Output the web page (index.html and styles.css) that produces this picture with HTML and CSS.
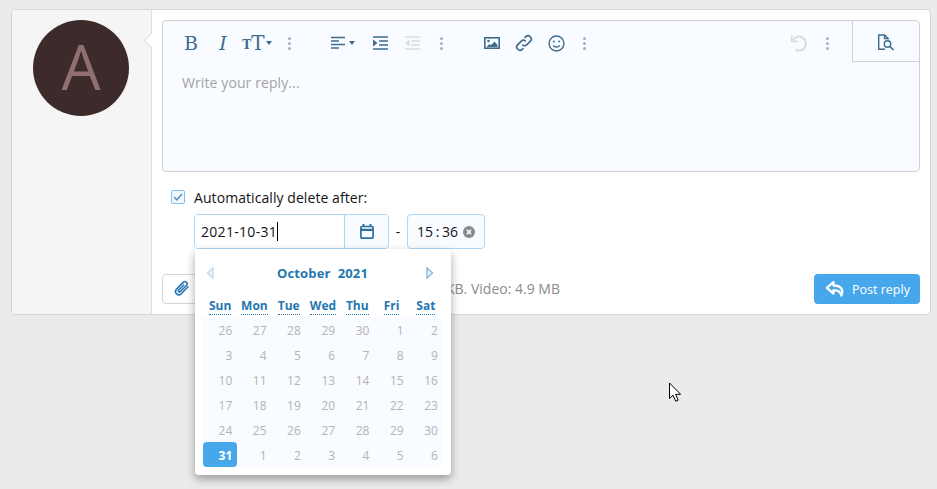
FILE: index.html
```html
<!DOCTYPE html>
<html lang="en">
<head>
  <meta charset="UTF-8">
  <title>Post reply</title>
  <link rel="stylesheet" href="styles.css">
</head>
<body>
  <div class="card">
    <div class="side">
      <div class="avatar">A</div>
      <span class="pointer"></span>
    </div>
    <div class="main">
      <div class="editor">
        <div class="toolbar">
          <div class="group first">
            <span class="btn letter">B</span>
            <span class="btn letter italic">I</span>
            <span class="btn size"><span class="small-t">T</span><span class="big-t">T</span><i class="caret"></i></span>
            <span class="btn dots"><i></i><i></i><i></i></span>
          </div>
          <div class="group second">
            <span class="btn align">
              <svg width="14" height="14" viewBox="0 0 14 14"><path d="M0 1.5h14M0 5h8M0 8.500h14M0 12h8" stroke="#3f6b8c" stroke-width="1.600"/></svg>
              <i class="caret"></i>
            </span>
            <span class="btn">
              <svg width="15" height="14" viewBox="0 0 15 14"><path d="M0 1h15M6 5h9M6 9h9M0 13h15" stroke="#3f6b8c" stroke-width="1.700"/><path d="M0 3.500L4.500 7 0 10.500z" fill="#3f6b8c"/></svg>
            </span>
            <span class="btn">
              <svg width="15" height="14" viewBox="0 0 15 14"><path d="M0 1h15M6 5h9M6 9h9M0 13h15" stroke="#d8dcdf" stroke-width="1.700"/><path d="M4.500 3.500L0 7l4.500 3.500z" fill="#d8dcdf"/></svg>
            </span>
            <span class="btn dots"><i></i><i></i><i></i></span>
          </div>
          <div class="group third">
            <span class="btn">
              <svg width="16" height="12" viewBox="0 0 16 12"><rect x=".8" y=".8" width="14.400" height="10.400" fill="none" stroke="#3f6b8c" stroke-width="1.600"/><circle cx="4.500" cy="4" r="1.300" fill="#3f6b8c"/><path d="M2.500 10l3-3 1.500 1.200L10.500 4.500 13.500 8v2z" fill="#3f6b8c"/></svg>
            </span>
            <span class="btn">
              <svg width="18" height="18" viewBox="0 0 16 16" fill="none" stroke="#3f6b8c" stroke-width="1.500"><path d="M6.500 9.500a2.900 2.900 0 0 0 4.100 0l3-3a2.900 2.900 0 0 0-4.100-4.100L8.500 3.400"/><path d="M9.500 6.500a2.900 2.900 0 0 0-4.100 0l-3 3a2.900 2.900 0 0 0 4.100 4.100l1-1"/></svg>
            </span>
            <span class="btn">
              <svg width="17" height="17" viewBox="0 0 16 16" fill="none" stroke="#3f6b8c" stroke-width="1.300"><circle cx="8" cy="8" r="7"/><path d="M4.800 9.800c1.600 2 4.800 2 6.400 0"/><circle cx="5.500" cy="6" r=".9" fill="#3f6b8c" stroke="none"/><circle cx="10.500" cy="6" r=".9" fill="#3f6b8c" stroke="none"/></svg>
            </span>
            <span class="btn dots narrow"><i></i><i></i><i></i></span>
          </div>
          <div class="group right">
            <span class="btn">
              <svg width="18" height="18" viewBox="0 0 16 16" fill="none" stroke="#d8dcdf" stroke-width="1.800"><path d="M2.500 5.500A6.200 6.200 0 1 1 5 14"/><path d="M1.500 1v5.500H7" stroke-width="1.500"/></svg>
            </span>
            <span class="btn dots narrow"><i></i><i></i><i></i></span>
          </div>
          <div class="preview">
            <svg width="18" height="17" viewBox="0 0 18 17" fill="none" stroke="#3f6b8c" stroke-width="1.400"><path d="M8 15.300H1.700V1h6l3.500 3.500v1"/><path d="M7.500 1v3.500h3.500"/><circle cx="10.500" cy="10" r="3.200"/><path d="M13 12.500l3.500 3.500" stroke-width="1.700"/></svg>
          </div>
        </div>
        <div class="placeholder">Write your reply...</div>
      </div>

      <label class="check-row">
        <span class="checkbox">
          <svg width="10" height="8" viewBox="0 0 10 8" fill="none" stroke="#5d90b8" stroke-width="1.500"><path d="M1 4l2.800 2.800L9 1"/></svg>
        </span>
        Automatically delete after:
      </label>

      <div class="date-row">
        <div class="date-input">
          <span class="date-text">2021-10-31<i class="text-cursor"></i></span>
          <span class="date-btn">
            <svg width="14" height="15" viewBox="0 0 14 15" fill="none" stroke="#2f6f9f" stroke-width="1.700"><rect x=".9" y="2.500" width="12.200" height="11.600" rx="1"/><path d="M.8 5.800h12.400" stroke-width="2.200"/><path d="M3.500 0v3M10.500 0v3" stroke-width="2"/></svg>
          </span>
        </div>
        <span class="dash">-</span>
        <div class="time-input">
          <span class="time-text">15 : 36</span>
          <svg width="12" height="12" viewBox="0 0 12 12"><circle cx="6" cy="6" r="6" fill="#8a8a8a"/><path d="M3.800 3.800l4.400 4.400M8.200 3.800L3.800 8.200" stroke="#fff" stroke-width="1.500"/></svg>
        </div>
      </div>

      <div class="footer">
        <span class="attach">
          <svg width="16" height="18" viewBox="0 0 16 18" fill="none" stroke="#2577b1" stroke-width="1.600"><path d="M14.300 6.500L7 14a3.300 3.300 0 0 1-4.700-4.600l7.200-7.300a2.200 2.200 0 0 1 3.100 3.100l-6.500 6.600a1 1 0 0 1-1.500-1.500L10 4.800"/></svg>
        </span>
        <span class="limits">KB. Video: 4.9 MB</span>
        <span class="post">
          <svg width="20" height="18" viewBox="0 0 20 18" fill="none" stroke="#fff" stroke-width="2.300"><path d="M8.500 2L1.800 7.800l6.700 5.700v-3.300c4.500 0 7 1 7.800 5.300 2.500-5.500 0-10-7.800-10z" stroke-linejoin="round"/></svg>
          Post reply
        </span>
      </div>
    </div>
  </div>

  <div class="picker">
    <div class="picker-head">
      <svg width="8" height="12" viewBox="0 0 8 12"><path d="M7 1L1.500 6 7 11z" fill="#f1f6fa" stroke="#c8dcea" stroke-width="1.500"/></svg>
      <span class="month">October&nbsp; 2021</span>
      <svg width="8" height="12" viewBox="0 0 8 12"><path d="M1 1l5.500 5L1 11z" fill="#f1f6fa" stroke="#8fb8d8" stroke-width="1.500"/></svg>
    </div>
    <div class="days">
      <span class="dow"><abbr>Sun</abbr></span><span class="dow"><abbr>Mon</abbr></span><span class="dow"><abbr>Tue</abbr></span><span class="dow"><abbr>Wed</abbr></span><span class="dow"><abbr>Thu</abbr></span><span class="dow"><abbr>Fri</abbr></span><span class="dow"><abbr>Sat</abbr></span>
    </div>
    <div class="dates">
      <span>26</span><span>27</span><span>28</span><span>29</span><span>30</span><span>1</span><span>2</span>
      <span>3</span><span>4</span><span>5</span><span>6</span><span>7</span><span>8</span><span>9</span>
      <span>10</span><span>11</span><span>12</span><span>13</span><span>14</span><span>15</span><span>16</span>
      <span>17</span><span>18</span><span>19</span><span>20</span><span>21</span><span>22</span><span>23</span>
      <span>24</span><span>25</span><span>26</span><span>27</span><span>28</span><span>29</span><span>30</span>
      <span class="selected">31</span><span>1</span><span>2</span><span>3</span><span>4</span><span>5</span><span>6</span>
    </div>
  </div>

  <svg class="mouse" width="15" height="21" viewBox="0 0 15 21"><path d="M1.500 1v15.500l3.600-3.300 2.600 6 2.500-1.100-2.600-5.800h5z" fill="#fff" stroke="#000" stroke-width="1"/></svg>
</body>
</html>
```

FILE: styles.css
```css
* {
  box-sizing: border-box;
}
body {
  margin: 0;
  padding: 9px 6px 0 11px;
  height: 489px;
  overflow: hidden;
  background: #ebebeb;
  font-family: "Open Sans", "Noto Sans", Arial, sans-serif;
  font-size: 14px;
  color: #141414;
}
.card {
  display: flex;
  width: 920px;
  height: 306px;
  background: white;
  border: 1px solid #d5d5d5;
  border-radius: 4px;
}
.side {
  position: relative;
  width: 140px;
  padding: 10px 0 0 21px;
  background: #f5f5f5;
  border-right: 1px solid #dfdfdf;
  border-radius: 3px 0 0 3px;
}
.avatar {
  display: flex;
  align-items: center;
  justify-content: center;
  width: 96px;
  height: 96px;
  padding-bottom: 4px;
  border-radius: 50%;
  background: #3d2b2b;
  color: #8f6f6f;
  font-size: 62px;
  line-height: 1;
}
.pointer {
  position: absolute;
  top: 25px;
  right: -6px;
  width: 11px;
  height: 11px;
  background: white;
  border-left: 1px solid #dfdfdf;
  border-bottom: 1px solid #dfdfdf;
  transform: rotate(45deg);
}
.main {
  flex: 1;
  padding: 10px;
}
.editor {
  height: 152px;
  background: #f8fbff;
  border: 1px solid #cfd2d5;
  border-radius: 4px;
}
.toolbar {
  display: flex;
  height: 41px;
  padding-left: 12px;
}
.group {
  display: flex;
}
.second {
  margin-left: 17px;
}
.third {
  margin-left: 22px;
}
.right {
  margin-left: auto;
  margin-right: 13px;
}
.btn {
  display: flex;
  align-items: center;
  justify-content: center;
  width: 32px;
  height: 44px;
  color: #3f6b8c;
}
.letter {
  font-family: "DejaVu Serif", "Liberation Serif", serif;
  font-size: 19px;
}
.italic {
  font-style: italic;
}
.size {
  width: 36px;
  font-family: "DejaVu Serif", serif;
}
.small-t {
  font-size: 12px;
  margin-top: 4px;
  font-weight: bold;
}
.big-t {
  font-size: 20px;
}
.caret {
  display: inline-block;
  margin-left: 1px;
  border-top: 4px solid #3f6b8c;
  border-left: 3.500px solid transparent;
  border-right: 3.500px solid transparent;
}
.dots {
  flex-direction: column;
  gap: 2px;
  width: 29px;
}
.dots i {
  width: 3px;
  height: 3px;
  border-radius: 50%;
  background: #9fb1c2;
}
.second .dots {
  width: 26px;
}
.dots.narrow {
  width: 24px;
}
.align {
  width: 43px;
  gap: 3px;
}
.preview {
  display: flex;
  align-items: center;
  justify-content: center;
  width: 67px;
  height: 41px;
  padding-top: 3px;
  border-left: 1px solid #cfd2d5;
  border-bottom: 1px solid #cfd2d5;
}
.placeholder {
  padding: 11px 19px;
  font-size: 14px;
  letter-spacing: 0.1px;
  line-height: 20px;
  color: #a4a4a4;
}
.check-row {
  display: flex;
  align-items: center;
  gap: 9px;
  height: 20px;
  margin: 15px 0 0 9px;
  letter-spacing: 0.07px;
}
.checkbox {
  display: flex;
  align-items: center;
  justify-content: center;
  width: 14px;
  height: 14px;
  background: #f3f8fd;
  border: 1px solid #84bfec;
  border-radius: 2px;
}
.date-row {
  display: flex;
  align-items: center;
  height: 35px;
  margin: 7px 0 0 32px;
}
.date-input {
  display: flex;
  width: 195px;
  height: 35px;
  border: 1px solid #aed7f5;
  border-radius: 4px;
  overflow: hidden;
}
.date-text {
  display: flex;
  align-items: center;
  flex: 1;
  padding-left: 6px;
  background: white;
  letter-spacing: 0.3px;
}
.text-cursor {
  width: 1px;
  height: 19px;
  background: black;
}
.date-btn {
  display: flex;
  align-items: center;
  justify-content: center;
  width: 44px;
  background: #f8fbff;
  border-left: 1px solid #aed7f5;
}
.dash {
  width: 18px;
  text-align: center;
}
.time-input {
  display: flex;
  align-items: center;
  gap: 5px;
  width: 78px;
  height: 35px;
  padding-left: 9px;
  background: #f8fbff;
  border: 1px solid #aed7f5;
  border-radius: 4px;
}
.time-text {
  word-spacing: -1px;
}
.footer {
  display: flex;
  align-items: center;
  height: 30px;
  margin-top: 25px;
}
.attach {
  display: flex;
  align-items: center;
  width: 60px;
  height: 30px;
  padding-left: 11px;
  border: 1px solid #d5d5d5;
  border-radius: 4px;
}
.limits {
  margin: 0 0 2px 224px;
  color: #8c8c8c;
}
.post {
  display: flex;
  align-items: center;
  gap: 7px;
  width: 106px;
  height: 30px;
  margin-left: auto;
  padding-left: 11px;
  background: #47a7eb;
  border-radius: 4px;
  color: white;
  font-size: 12.500px;
}
.picker {
  position: absolute;
  left: 195px;
  top: 249px;
  width: 256px;
  height: 226px;
  padding: 0 8px;
  background: white;
  border-radius: 4px;
  box-shadow: 0 4px 10px rgba(0, 0, 0, 0.35);
}
.picker-head {
  display: flex;
  align-items: center;
  justify-content: space-between;
  height: 48px;
  padding: 0 9px 0 3px;
}
.month {
  margin-left: 5px;
  color: #2577b1;
  font-weight: bold;
  font-size: 13px;
  letter-spacing: 0.15px;
}
.days, .dates {
  display: grid;
  grid-template-columns: repeat(7, 1fr);
}
.dow {
  height: 20px;
  line-height: 18px;
  text-align: center;
  color: #2577b1;
  font-size: 12px;
  font-weight: bold;
}
.dow abbr {
  border-bottom: 1px dotted #2577b1;
}
.dates {
  background: #f8fbff;
}
.dates span {
  height: 25px;
  line-height: 27px;
  padding-right: 5px;
  text-align: right;
  font-size: 12px;
  color: #b4b4b4;
}
.dates .selected {
  background: #47a7eb;
  border-radius: 4px;
  color: white;
  font-weight: bold;
}
.mouse {
  position: absolute;
  left: 668px;
  top: 382px;
}
```
